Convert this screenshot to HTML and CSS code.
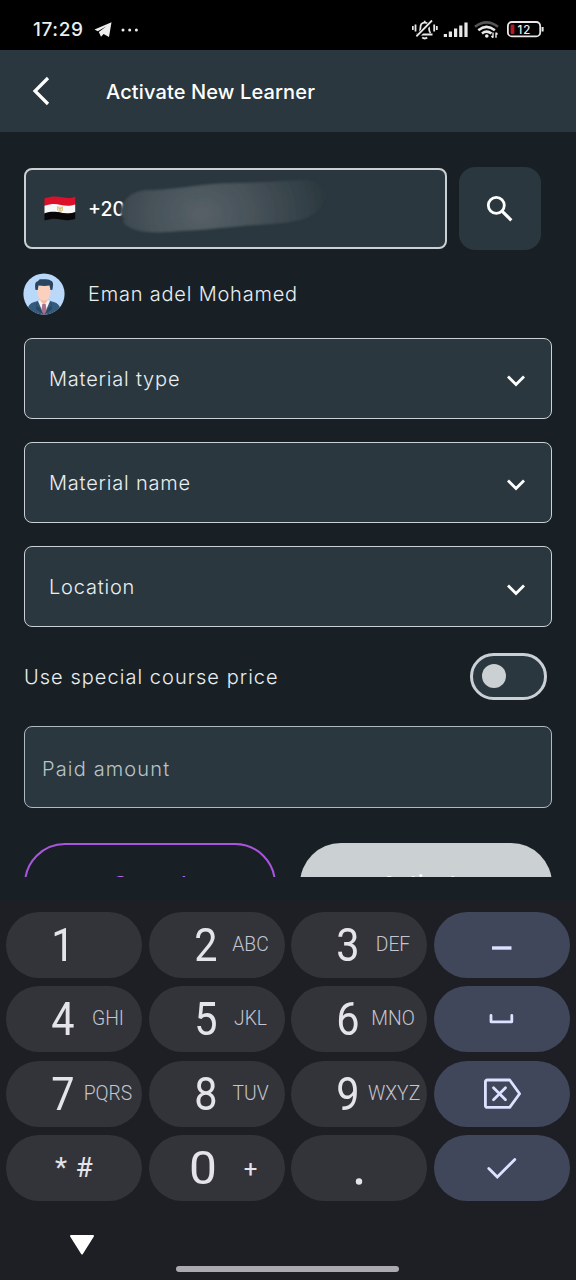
FILE: index.html
```
<!DOCTYPE html>
<html lang="en">
<head>
<meta charset="utf-8">
<title>Activate New Learner</title>
<link rel="stylesheet" href="styles.css">
</head>
<body>
<div class="screen">
  <div class="status">
    <span class="time">17:29</span>
    <svg class="telegram" width="18" height="16" viewBox="0 0 18 16"><path d="M.5 7.500 17.500.3 15 15 9.600 12 7 14.700 4.800 10 12.500 4.200 3.800 9.300z" fill="#eee"/></svg>
    <svg class="dots" width="18" height="4" viewBox="0 0 18 4" fill="#eee"><circle cx="2" cy="2" r="1.500"/><circle cx="8.700" cy="2" r="1.500"/><circle cx="15.400" cy="2" r="1.500"/></svg>
    <svg class="indicators" width="134" height="24" viewBox="0 0 134 24" fill="none" stroke="#e8e8e8">
      <path d="M4.500 16.500h16M7.200 15c1.200-1.400 1.200-3 1.200-5 0-3.500 1.800-5.300 4.300-5.300s4.300 1.800 4.300 5.300c0 2.400.2 3.600 1.500 5M12.700 4.500V2.700" stroke-width="1.800"/>
      <path d="M10.200 19.500q2.500 1.800 5 0" stroke-width="2"/>
      <path d="M5.200 18.500 21 2.200" stroke="#000" stroke-width="4"/>
      <path d="M4.400 18.300 20 2.500M.8 8v4M3.500 6.500v7M22.200 6.500v7M24.800 8v4" stroke-width="1.800"/>
      <path d="M33.400 16v3M38.400 13.500V19M43.600 10.500V19M48.800 7.500V19M54 4.500V19" stroke-width="3.200" stroke-linecap="butt"/>
      <path d="M63 8.800q11.500-9 23 0" stroke="#555" stroke-width="2.600"/>
      <path d="M66.300 12.200q8.200-6.500 16.600 0M70 15.500q4.600-3.600 9.500 0" stroke-width="2.600"/>
      <circle cx="74.800" cy="18" r="1.800" fill="#eee" stroke="none"/>
      <path d="M81 14.500v5.200M79.400 18l1.600 1.700M84 19.800v-5.200M85.600 16.400 84 14.600" stroke-width="1.400"/>
      <rect x="95.900" y="4" width="32.300" height="14.400" rx="4" stroke-width="1.800"/>
      <rect x="98.600" y="6.600" width="3.800" height="9.500" rx="1" fill="#b5161f" stroke="none"/>
      <path d="M130.600 9v4.500" stroke-width="2"/>
      <text class="battery-text" x="112.500" y="15.600" text-anchor="middle">12</text>
    </svg>
  </div>
  <header class="appbar">
    <svg class="back" width="20" height="30" viewBox="0 0 20 30"><path d="M17 2 4 15 17 28" fill="none" stroke="#fff" stroke-width="3.200"/></svg>
    <h1 class="title">Activate New Learner</h1>
  </header>
  <main class="form">
    <div class="phone-row">
      <div class="phone">
        <svg class="flag" width="32" height="25" viewBox="0 0 32 25">
          <path d="M.5 2.2C9-.4 13 .3 18 1.3s9 1.2 13.2-.6v8.1C26 10.6 22 10.4 17 9.2S8 8.7.5 10.2z" fill="#dc1028"/>
          <path d="M.5 9.8C8 7.4 12 8 17 9s9 1.2 14.2-.6v7.7c-5 1.9-9 1.6-14.2.6S8 15.8.5 17.8z" fill="#f7f7f7"/>
          <path d="M.5 17.3c7.500-2.300 11.500-1.500 16.500-.500s9 1.200 14.200-.600v6.600c-5 2-9 1.600-14.200.600S8 22.300.5 24.400z" fill="#070707"/>
          <path d="M13.800 10.200v4.400M18.200 10.500v4.400M14 11.300l2 2 2-2M16 10.500v3.700M14.300 15h3.500" stroke="#cfb75c" fill="none"/>
        </svg>
        <span class="prefix">+20</span>
        <svg class="smudge" width="212" height="68" viewBox="0 0 212 68">
          <defs>
            <radialGradient id="glow" gradientUnits="userSpaceOnUse" cx="82" cy="37" r="124" gradientTransform="translate(0 5) scale(1 .8)">
              <stop offset="0" stop-color="#566067"/><stop offset=".45" stop-color="#455157"/><stop offset=".8" stop-color="#354249"/><stop offset="1" stop-color="#2c393f"/>
            </radialGradient>
            <filter id="soft" x="-5%" y="-10%" width="110%" height="120%"><feGaussianBlur stdDeviation=".9"/></filter>
          </defs>
          <path d="M1 33C3 21 12 12 28 11C58 11 76 5 112 4C145 4 171 1 188 1C205 4 209 15 204 25C195 40 178 43 153 45C116 47 92 51 62 52C36 55 12 54 4 43C7 39 2 38 1 33Z" fill="url(#glow)" filter="url(#soft)"/>
        </svg>
      </div>
      <button class="search" aria-label="Search">
        <svg width="28" height="28" viewBox="0 0 28 28" fill="none" stroke="#fff" stroke-width="2.800"><circle cx="10.300" cy="10.300" r="8"/><path d="M16.300 16.300 25.300 25.300" stroke-width="3.200"/></svg>
      </button>
    </div>
    <div class="learner">
      <svg class="avatar" width="42" height="42" viewBox="0 0 42 42">
        <defs><clipPath id="face"><circle cx="21" cy="21" r="20.600"/></clipPath></defs>
        <g clip-path="url(#face)">
          <path d="M0 0h42v42H0z" fill="#bad8fa"/>
          <path d="M4 42c0-8 2-12 9-13.500l8-2 8 2c7 1.500 9 5.500 9 13.500z" fill="#355b7c"/>
          <path d="M15 28l6-3 6 3-6 14z" fill="#f2f4f8"/>
          <path d="M17.500 22h7v6L21 32l-3.500-4z" fill="#f2b8a2"/>
          <path d="M19.300 31h3.400l1.300 11h-6z" fill="#a8708b"/>
          <path d="M14.500 11h13v9c0 4-3 7.500-6.500 7.500s-6.500-3.500-6.500-7.500z" fill="#fbd0bd"/>
          <path d="M12.500 17c-.8-6-.5-8 2.500-8.800 1-2.600 3-2 6-2s5 0 6.500 1.200c3 .8 3.200 4 1.800 9.600h-1.800l-1-4.500c-4 .7-7 .5-11 0l-.8 4.500z" fill="#29455f"/>
          <path d="M15 27l-2 5 3 2 5 8-8-6M27 27l2 5-3 2-5 8 8-6" fill="#284864"/>
        </g>
      </svg>
      <span class="learner-name">Eman adel Mohamed</span>
    </div>
    <div class="select"><span class="select-label">Material type</span><svg class="chevron" width="20" height="14" viewBox="0 0 20 14"><path d="M2 2.500 10 10.500 18 2.500" fill="none" stroke="#fff" stroke-width="2.800"/></svg></div>
    <div class="select"><span class="select-label">Material name</span><svg class="chevron" width="20" height="14" viewBox="0 0 20 14"><path d="M2 2.500 10 10.500 18 2.500" fill="none" stroke="#fff" stroke-width="2.800"/></svg></div>
    <div class="select"><span class="select-label">Location</span><svg class="chevron" width="20" height="14" viewBox="0 0 20 14"><path d="M2 2.500 10 10.500 18 2.500" fill="none" stroke="#fff" stroke-width="2.800"/></svg></div>
    <div class="toggle-row"><span class="toggle-label">Use special course price</span><span class="toggle"><span class="knob"></span></span></div>
    <div class="amount"><span class="amount-label">Paid amount</span></div>
    <div class="actions"><button class="action cancel">Cancel</button><button class="action activate">Activate</button></div>
  </main>
  <section class="keyboard">
    <div class="keys">
      <div class="key"><span class="digit">1</span></div>
      <div class="key"><span class="digit">2</span><span class="letters">ABC</span></div>
      <div class="key"><span class="digit">3</span><span class="letters">DEF</span></div>
      <div class="key fn"><svg width="40" height="40" viewBox="0 0 40 40"><path d="M10 23h19.500" stroke="#dce2ff" stroke-width="3.400"/></svg></div>
      <div class="key"><span class="digit">4</span><span class="letters">GHI</span></div>
      <div class="key"><span class="digit">5</span><span class="letters">JKL</span></div>
      <div class="key"><span class="digit">6</span><span class="letters">MNO</span></div>
      <div class="key fn"><svg width="40" height="40" viewBox="0 0 40 40"><path d="M9 16.500v6.300h20.800v-6.300" fill="none" stroke="#dce2ff" stroke-width="2.800" stroke-linejoin="round" stroke-linecap="round"/></svg></div>
      <div class="key"><span class="digit">7</span><span class="letters">PQRS</span></div>
      <div class="key"><span class="digit">8</span><span class="letters">TUV</span></div>
      <div class="key"><span class="digit">9</span><span class="letters">WXYZ</span></div>
      <div class="key fn"><svg width="40" height="40" viewBox="0 0 40 40" fill="none" stroke="#dce2ff" stroke-width="2.800" stroke-linejoin="round"><path d="M3.400 8q0-2 2-2h22.300l9.900 13.800-9.900 13.600H5.400q-2 0-2-2z"/><path d="M11.500 13.700l12 12M23.500 13.700l-12 12" stroke-linecap="round"/></svg></div>
      <div class="key symbols"><span class="star">*</span><span class="hash">#</span></div>
      <div class="key"><span class="digit zero">0</span><span class="letters plus">+</span></div>
      <div class="key symbols"><svg width="136" height="66" viewBox="0 0 136 66"><circle cx="68" cy="46.500" r="3.200" fill="#e4e4ea"/></svg></div>
      <div class="key fn"><svg width="40" height="40" viewBox="0 0 40 40"><path d="M6.800 20.500 15.300 29 32.800 11.500" fill="none" stroke="#dce2ff" stroke-width="2.800" stroke-linecap="round"/></svg></div>
    </div>
    <svg class="hide" width="26" height="22" viewBox="0 0 26 22"><path d="M2 2h22L13 19.500z" fill="#fff" stroke="#fff" stroke-width="2" stroke-linejoin="round"/></svg>
    <div class="home-bar"></div>
  </section>
</div>
</body>
</html>
```
FILE: styles.css
```
* { box-sizing: border-box; }
body { margin: 0; background: #182026; font-family: Inter, sans-serif; color: #e9eef0; }
button { font: inherit; color: inherit; padding: 0; border: 0; }
.screen { width: 576px; height: 1280px; overflow: hidden; display: flex; flex-direction: column; }
.status { height: 50px; background: #000; display: flex; align-items: center; padding: 9px 31px 0 33px; flex: none; }
.time { width: 51px; font-size: 19px; font-weight: 500; line-height: 24px; letter-spacing: .6px; white-space: nowrap; }
.telegram { margin-left: 10px; }
.dots { margin-left: 9px; }
.indicators { margin-left: auto; margin-right: -1px; }
.battery-text { font: 500 11.500px Inter, sans-serif; fill: #eee; stroke: none; letter-spacing: 1px; }
.appbar { height: 82px; flex: none; background: #2a373e; display: flex; align-items: center; padding-left: 31px; }
.back { flex: none; }
.title { margin: 1px 0 0 55px; font-size: 20px; font-weight: 500; line-height: 28px; color: #fff; letter-spacing: .13px; white-space: nowrap; }
.form { height: 745px; flex: none; overflow: hidden; padding: 35px 24px 0; display: flex; flex-direction: column; }
.phone-row { display: flex; align-items: center; gap: 12px; height: 83px; flex: none; }
.phone { width: 423px; height: 81px; border: 2px solid #cbd0d3; border-radius: 8px; background: #2a373e; display: flex; align-items: center; padding-left: 18px; position: relative; }
.prefix { margin-left: 12px; font-size: 19.500px; font-weight: 500; color: #fff; line-height: 24px; }
.smudge { position: absolute; left: 93px; top: 9px; }
.search { width: 82px; height: 83px; border-radius: 16px; background: #2a373e; display: flex; align-items: center; justify-content: center; }
.learner { height: 42px; margin-top: 22.500px; display: flex; align-items: center; gap: 23px; flex: none; margin-left: -1px; }
.learner-name, .select-label, .toggle-label, .amount-label { font-size: 20px; font-weight: 350; line-height: 28px; letter-spacing: .8px; white-space: nowrap; }
.select-label { padding-top: 1px; }
.select { height: 81px; flex: none; border: 1.500px solid #cbd0d6; border-radius: 8px; background: #2a373e; display: flex; align-items: center; justify-content: space-between; padding: 0 25px 0 24px; margin-bottom: 23.300px; }
.learner + .select { margin-top: 23px; }
.chevron { margin-top: 6px; }
.toggle-row { height: 47px; flex: none; margin-top: 2.500px; display: flex; align-items: center; justify-content: space-between; padding-right: 5px; }
.toggle-label { letter-spacing: 1.040px; padding-top: 1px; }
.toggle { width: 77px; height: 47px; border: 3px solid #cbd0d6; border-radius: 24px; background: #2a373e; display: flex; align-items: center; padding-left: 9px; }
.knob { width: 24px; height: 24px; border-radius: 50%; background: #cbd0d2; }
.amount { height: 82px; flex: none; margin-top: 26px; border: 1.500px solid #aebac0; border-radius: 8px; background: #2a373e; display: flex; align-items: center; padding: 5px 17px 0; color: #b8c4ca; }
.amount-label { letter-spacing: 1.150px; }
.actions { display: grid; grid-template-columns: 252px 252px; gap: 24px; margin-top: 35.500px; flex: none; }
.action { height: 82px; border-radius: 41px; font-size: 20.500px; font-weight: 500; letter-spacing: 1.200px; background: none; padding-bottom: 1px; }
.cancel { border: 2px solid #aa55dd; color: #bb66ee; }
.activate { background: #cbd0d2; color: #fff; font-weight: 600; letter-spacing: .8px; }
.keyboard { margin-top: 24px; height: 379px; flex: none; background: #1e1f24; padding: 11px 6px 0; display: flex; flex-direction: column; }
.keys { display: grid; grid-template-columns: repeat(4, 136px); grid-auto-rows: 66px; column-gap: 6.500px; row-gap: 8.300px; }
.key { border-radius: 33px; background: #333439; display: flex; align-items: center; font-family: Roboto, sans-serif; color: #e4e4ea; }
.digit { width: 40px; margin-left: 37px; text-align: center; font-size: 46px; line-height: 66px; transform: scaleX(.9); }
.letters { width: 50px; text-align: center; font-size: 19.300px; line-height: 68px; color: #c4c5d0; font-weight: 300; white-space: nowrap; }
.fn { background: #41475a; justify-content: center; }
.digit.zero { margin-left: 34.500px; transform: scaleX(1.080); }
.plus { margin-left: 2.500px; font-size: 24px; font-weight: 400; color: #e4e4ea; padding-top: 3px; }
.symbols { font-size: 28px; }
.star { width: 16px; margin-left: 47px; text-align: center; }
.hash { width: 20px; margin-left: 5px; text-align: center; }
.hide { margin: 33px 0 0 63px; flex: none; }
.home-bar { width: 223px; height: 6px; border-radius: 3px; background: #aaaab0; margin: 10px 0 0 170px; flex: none; }
```
